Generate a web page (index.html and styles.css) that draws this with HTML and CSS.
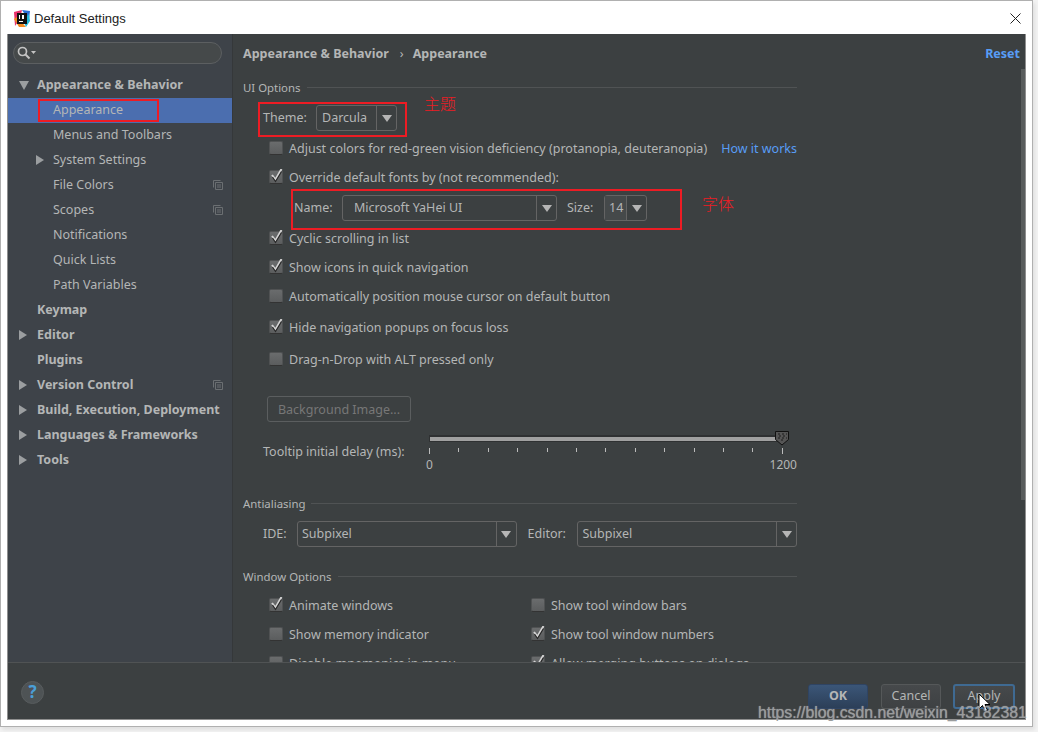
FILE: index.html
```html
<!DOCTYPE html>
<html lang="en">
<head>
    <meta charset="UTF-8">
    <title>Default Settings</title>
    <link rel="stylesheet" href="styles.css">
</head>
<body>
    <svg class="defs" width="0" height="0">
        <symbol id="copy-icon" viewBox="0 0 10 10">
            <path d="M0.5 7.5V0.5H7.5" fill="none" stroke="#6b6f72"/>
            <path d="M2.5 2.5H9.5V9.5H2.5Z M4 5H8 M4 7H8" fill="none" stroke="#6b6f72"/>
        </symbol>
        <symbol id="check-icon" viewBox="0 0 14 14">
            <path d="M3 6L6.5 10.5L12.5 0" fill="none" stroke="#d4d4d4" stroke-width="2"/>
            <path d="M3.5 8L6.5 12.5L12.5 2.5" fill="none" stroke="#262626" stroke-width="1.2"/>
        </symbol>
    </svg>

    <div class="window">
        <div class="titlebar">
            <svg class="app-icon" width="16" height="17" viewBox="0 0 16 17">
                <path d="M0 2L8 0L6 9L1 16Z" fill="#e8316b"/>
                <path d="M8 0L16 1L15 9L10 3Z" fill="#2a6fd6"/>
                <path d="M0 9L5 17H12L3 7Z" fill="#f28a1e"/>
                <path d="M12 17L16 11L15 4L9 10Z" fill="#22b8d8"/>
                <rect x="3" y="3" width="10" height="11" fill="#111"/>
                <rect x="5" y="5" width="1" height="4" fill="#fff"/>
                <rect x="8" y="5" width="2" height="4" fill="#fff"/>
                <rect x="5" y="11" width="4" height="1" fill="#fff"/>
            </svg>
            <span class="title-text">Default Settings</span>
            <svg class="close-icon" width="11" height="11" viewBox="0 0 11 11">
                <path d="M0.5 0.5L10.5 10.5M10.5 0.5L0.5 10.5" stroke="#222" fill="none"/>
            </svg>
        </div>

        <div class="frame">
            <div class="settings-body">
                <div class="sidebar">
                    <div class="search">
                        <svg width="20" height="14" viewBox="0 0 20 14">
                            <circle cx="5.5" cy="5.5" r="4" fill="none" stroke="#c4c4c4" stroke-width="1.7"/>
                            <path d="M8.5 8.5L12.5 12.5" stroke="#c4c4c4" stroke-width="2"/>
                            <path d="M14 5H19L16.5 8Z" fill="#c4c4c4"/>
                        </svg>
                    </div>
                    <div class="tree-row top"><i class="arrow-down"></i><span>Appearance &amp; Behavior</span></div>
                    <div class="tree-row child selected"><i class="slot"></i><span>Appearance</span></div>
                    <div class="tree-row child"><i class="slot"></i><span>Menus and Toolbars</span></div>
                    <div class="tree-row child"><i class="arrow-right"></i><span>System Settings</span></div>
                    <div class="tree-row child"><i class="slot"></i><span>File Colors</span><svg class="copy"><use href="#copy-icon"/></svg></div>
                    <div class="tree-row child"><i class="slot"></i><span>Scopes</span><svg class="copy"><use href="#copy-icon"/></svg></div>
                    <div class="tree-row child"><i class="slot"></i><span>Notifications</span></div>
                    <div class="tree-row child"><i class="slot"></i><span>Quick Lists</span></div>
                    <div class="tree-row child"><i class="slot"></i><span>Path Variables</span></div>
                    <div class="tree-row top"><i class="slot"></i><span>Keymap</span></div>
                    <div class="tree-row top"><i class="arrow-right"></i><span>Editor</span></div>
                    <div class="tree-row top"><i class="slot"></i><span>Plugins</span></div>
                    <div class="tree-row top"><i class="arrow-right"></i><span>Version Control</span><svg class="copy"><use href="#copy-icon"/></svg></div>
                    <div class="tree-row top"><i class="arrow-right"></i><span>Build, Execution, Deployment</span></div>
                    <div class="tree-row top"><i class="arrow-right"></i><span>Languages &amp; Frameworks</span></div>
                    <div class="tree-row top"><i class="arrow-right"></i><span>Tools</span></div>
                </div>

                <div class="main">
                    <div class="breadcrumb">
                        <b>Appearance &amp; Behavior</b>
                        <span class="crumb-sep">›</span>
                        <b>Appearance</b>
                        <a class="reset">Reset</a>
                    </div>

                    <div class="form">
                        <div class="group-title"><span>UI Options</span></div>

                        <div class="field-row theme-row">
                            <label>Theme:</label>
                            <div class="combo combo-theme"><span class="combo-value">Darcula</span><span class="combo-btn"><i></i></span></div>
                        </div>

                        <div class="check-row m7"><span class="box"></span><span>Adjust colors for red-green vision deficiency (protanopia, deuteranopia)</span><a class="link">How it works</a></div>
                        <div class="check-row m9"><span class="box"><svg><use href="#check-icon"/></svg></span><span>Override default fonts by (not recommended):</span></div>

                        <div class="field-row font-row">
                            <label>Name:</label>
                            <div class="combo combo-name"><span class="combo-value">Microsoft YaHei UI</span><span class="combo-btn"><i></i></span></div>
                            <label class="size-label">Size:</label>
                            <div class="combo combo-size"><span class="combo-value">14</span><span class="combo-btn"><i></i></span></div>
                        </div>

                        <div class="check-row m7"><span class="box"><svg><use href="#check-icon"/></svg></span><span>Cyclic scrolling in list</span></div>
                        <div class="check-row m9"><span class="box"><svg><use href="#check-icon"/></svg></span><span>Show icons in quick navigation</span></div>
                        <div class="check-row m9"><span class="box"></span><span>Automatically position mouse cursor on default button</span></div>
                        <div class="check-row m11"><span class="box"><svg><use href="#check-icon"/></svg></span><span>Hide navigation popups on focus loss</span></div>
                        <div class="check-row m12"><span class="box"></span><span>Drag-n-Drop with ALT pressed only</span></div>

                        <button class="bg-image-btn">Background Image...</button>

                        <div class="slider-row">
                            <label>Tooltip initial delay (ms):</label>
                            <div class="slider">
                                <div class="track"></div>
                                <svg class="thumb" width="16" height="16" viewBox="0 0 16 16">
                                    <path d="M1.5 1.5H14.5V9.5L8 15L1.5 9.5Z" fill="#555" stroke="#111"/>
                                    <path d="M4 4H6M8 4H10M12 4H13M5 6H7M9 6H11M4 8H6M8 8H10M12 8H13M7 10H9" stroke="#1d1d1d"/>
                                </svg>
                                <div class="ticks">
                                    <i class="major"></i><i></i><i></i><i></i><i></i><i></i><i></i><i></i><i></i><i></i><i></i><i></i><i class="major"></i>
                                </div>
                                <div class="slider-labels"><span>0</span><span>1200</span></div>
                            </div>
                        </div>

                        <div class="group-title g20"><span>Antialiasing</span></div>

                        <div class="field-row aa-row">
                            <label>IDE:</label>
                            <div class="combo combo-aa"><span class="combo-value">Subpixel</span><span class="combo-btn"><i></i></span></div>
                            <label class="editor-label">Editor:</label>
                            <div class="combo combo-aa"><span class="combo-value">Subpixel</span><span class="combo-btn"><i></i></span></div>
                        </div>

                        <div class="group-title g20"><span>Window Options</span></div>

                        <div class="option-grid">
                            <div class="check-row"><span class="box"><svg><use href="#check-icon"/></svg></span><span>Animate windows</span></div>
                            <div class="check-row"><span class="box"></span><span>Show tool window bars</span></div>
                            <div class="check-row"><span class="box"></span><span>Show memory indicator</span></div>
                            <div class="check-row"><span class="box"><svg><use href="#check-icon"/></svg></span><span>Show tool window numbers</span></div>
                            <div class="check-row"><span class="box"></span><span>Disable mnemonics in menu</span></div>
                            <div class="check-row"><span class="box"><svg><use href="#check-icon"/></svg></span><span>Allow merging buttons on dialogs</span></div>
                        </div>
                    </div>
                    <div class="scrollbar"></div>
                </div>
            </div>

            <div class="footer">
                <div class="help">?</div>
                <div class="footer-btns">
                    <button class="btn btn-ok">OK</button>
                    <button class="btn">Cancel</button>
                    <button class="btn btn-apply">Apply</button>
                </div>
            </div>
        </div>

        <!-- red notes drawn over the screenshot -->
        <div class="mark mark-item"></div>
        <div class="mark mark-theme"></div>
        <div class="mark mark-font"></div>
        <div class="note note-theme">主题</div>
        <div class="note note-font">字体</div>
    </div>

    <svg class="cursor" width="13" height="20" viewBox="0 0 13 20">
        <path d="M1 1V16L4.5 12.5L7 18.5L9.5 17.5L7 11.5H12Z" fill="#fff" stroke="#000"/>
    </svg>
    <div class="watermark">https://blog.csdn.net/weixin_43182381</div>
</body>
</html>
```

FILE: styles.css
```css
*{
    margin:0;
    padding:0;
    box-sizing:border-box;
}
body{
    width:1038px;
    height:732px;
    overflow:hidden;
    position:relative;
    background:#f3f3f3;
    font-family:"Noto Sans","Noto Sans CJK SC",sans-serif;
    font-size:12.5px;
    color:#b4b6b6;
}
.defs{
    position:absolute;
}
.window{
    position:relative;
    width:1033px;
    height:727px;
    display:flex;
    flex-direction:column;
    padding:0 6px 6px;
    background:#fff;
    border:1px solid #b0b0b0;
    box-shadow:2px 3px 4px rgba(0,0,0,.08);
}
.titlebar{
    height:33px;
    flex:none;
    display:flex;
    align-items:center;
    padding-top:1px;
    color:#222;
    font-family:"Liberation Sans",sans-serif;
    font-size:13px;
}
.app-icon{
    margin-left:7px;
    margin-right:4px;
}
.close-icon{
    margin-left:auto;
    margin-right:5px;
}
.frame{
    flex:1;
    display:flex;
    flex-direction:column;
    border:1px solid #8f8f8f;
    border-top:0;
    background:#3c4041;
}
.settings-body{
    height:628px;
    flex:none;
    display:flex;
}

/* left tree */
.sidebar{
    width:225px;
    flex:none;
    padding-top:8px;
    background:#3e4349;
    border-right:1px solid #35383a;
    overflow:hidden;
}
.search{
    width:209px;
    height:22px;
    margin:0 0 9px 5px;
    padding:3px 0 0 3px;
    background:#45494a;
    border:1px solid #5c5f61;
    border-radius:11px;
}
.search svg{
    display:block;
}
.tree-row{
    height:25px;
    display:flex;
    align-items:center;
    padding-bottom:3px;
    position:relative;
    white-space:nowrap;
}
.tree-row.top{
    padding-left:11px;
    font-weight:bold;
}
.tree-row.top i{
    width:18px;
}
.tree-row.child{
    padding-left:28px;
}
.tree-row.child i{
    width:17px;
}
.tree-row.selected{
    background:#4b6eaf;
}
.tree-row i{
    flex:none;
    height:10px;
    position:relative;
    top:1px;
}
.arrow-down::before{
    content:"";
    position:absolute;
    left:0;
    top:1px;
    border-left:5px solid transparent;
    border-right:5px solid transparent;
    border-top:9px solid #9b9ea0;
}
.arrow-right::before{
    content:"";
    position:absolute;
    left:0;
    top:0;
    border-top:5px solid transparent;
    border-bottom:5px solid transparent;
    border-left:8px solid #9b9ea0;
}
.copy{
    position:absolute;
    left:205px;
    top:7px;
    width:10px;
    height:10px;
}

/* right side */
.main{
    flex:1;
    position:relative;
    padding-left:10px;
    overflow:hidden;
}
.breadcrumb{
    height:40px;
    padding:0 5px 2px 0;
    display:flex;
    align-items:center;
}
.crumb-sep{
    margin:0 9px 0 11px;
}
.reset{
    margin-left:auto;
    color:#589df6;
    font-weight:bold;
}
.form{
    width:554px;
    padding-top:3px;
}
.group-title{
    height:20px;
    display:flex;
    align-items:center;
    font-size:11.4px;
}
.group-title::after{
    content:"";
    flex:1;
    height:1px;
    margin-left:6px;
    background:#505354;
}
.g20{
    margin-top:19px;
}
.field-row{
    display:flex;
    align-items:center;
    height:26px;
}
.field-row label{
    padding-bottom:2px;
}
.theme-row{
    margin-top:8px;
    padding-left:20px;
}
.theme-row label{
    width:53px;
}
.font-row{
    margin-top:8px;
    padding-left:51px;
}
.font-row label{
    width:48px;
}
.font-row .size-label{
    width:37px;
    margin-left:10px;
}
.aa-row{
    margin-top:8px;
    padding-left:20px;
}
.aa-row label{
    width:34px;
}
.aa-row .editor-label{
    width:50px;
    margin-left:11px;
}
.combo{
    height:26px;
    display:flex;
    border:1px solid #646464;
    border-radius:3px;
}
.combo-value{
    flex:1;
    line-height:23px;
    padding-left:5px;
    white-space:nowrap;
}
.combo-btn{
    width:20px;
    flex:none;
    border-left:1px solid #646464;
    display:flex;
    align-items:center;
    justify-content:center;
}
.combo-btn i{
    border-left:5px solid transparent;
    border-right:5px solid transparent;
    border-top:7px solid #b5b5b5;
}
.combo-theme{
    width:81px;
}
.combo-name{
    width:215px;
}
.combo-name .combo-value{
    padding-left:11px;
}
.combo-size{
    width:43px;
}
.combo-size .combo-value{
    background:#45494a;
    padding-left:4px;
}
.combo-aa{
    width:220px;
}
.combo-aa .combo-value{
    padding-left:4px;
}
.check-row{
    height:20px;
    display:flex;
    align-items:center;
    padding-left:26px;
    white-space:nowrap;
}
.m7{
    margin-top:7px;
}
.m9{
    margin-top:9px;
}
.m11{
    margin-top:11px;
}
.m12{
    margin-top:12px;
}
.box{
    width:14px;
    height:14px;
    flex:none;
    margin-right:6px;
    background:linear-gradient(#6a6c6d,#5b5d5e);
    border:1px solid #505253;
    border-bottom-color:#333;
    border-radius:2px;
    position:relative;
}
.box svg{
    position:absolute;
    left:-1px;
    top:-2px;
    width:14px;
    height:14px;
    overflow:visible;
}
.link{
    margin-left:14px;
    color:#589df6;
}
.bg-image-btn{
    display:block;
    width:144px;
    height:26px;
    margin:27px 0 0 24px;
    background:none;
    border:1px solid #5b5e5f;
    border-radius:3px;
    color:#777;
    font:inherit;
}
.slider-row{
    display:flex;
    margin-top:10px;
    padding-left:20px;
}
.slider-row label{
    width:166px;
    flex:none;
    margin-top:11px;
    white-space:nowrap;
}
.slider{
    width:354px;
    height:42px;
    position:relative;
}
.track{
    height:7px;
    margin-top:3px;
    background:#a0a0a0;
    border:1px solid #2f3132;
    border-top-width:2px;
}
.thumb{
    position:absolute;
    left:345px;
    top:-2px;
}
.ticks{
    display:flex;
    justify-content:space-between;
    align-items:flex-start;
    height:6px;
    margin-top:6px;
}
.ticks i{
    width:1px;
    height:4px;
    background:#bbb;
}
.ticks .major{
    height:6px;
}
.slider-labels{
    display:flex;
    justify-content:space-between;
    margin:2px -14px 0 -3px;
    font-size:12px;
    line-height:18px;
}
.option-grid{
    display:grid;
    grid-template-columns:262px 1fr;
    row-gap:9px;
    margin-top:9px;
}
.scrollbar{
    position:absolute;
    right:0;
    top:35px;
    width:4px;
    height:431px;
    background:#595d5d;
}

/* bottom buttons */
.footer{
    flex:1;
    display:flex;
    justify-content:space-between;
    align-items:flex-start;
    padding:18px 10px 0 13px;
    border-top:1px solid #505354;
}
.help{
    width:23px;
    height:23px;
    border-radius:50%;
    background:#4e5355;
    border:1px solid #585c5e;
    color:#4a9fd8;
    font-size:17px;
    font-weight:bold;
    line-height:20px;
    text-align:center;
}
.footer-btns{
    display:flex;
    gap:13px;
    margin-top:3px;
}
.btn{
    width:60px;
    height:25px;
    padding-bottom:2px;
    background:linear-gradient(#46494b,#3e4143);
    border:1px solid #555859;
    border-radius:3px;
    color:#b4b6b6;
    font:inherit;
}
.btn-ok{
    background:linear-gradient(#3b5678,#2c3f58);
    border-color:#2f4463;
    font-weight:bold;
}
.btn-apply{
    width:62px;
    margin-left:-1px;
    border:2px solid #3f6a92;
}

/* annotations */
.mark{
    position:absolute;
    border:2px solid #ed1c24;
}
.mark-item{
    left:37px;
    top:98px;
    width:121px;
    height:23px;
}
.mark-theme{
    left:257px;
    top:101px;
    width:149px;
    height:35px;
}
.mark-font{
    left:290px;
    top:188px;
    width:391px;
    height:41px;
}
.note{
    position:absolute;
    color:#ed1c24;
    font-family:"Noto Sans CJK SC",sans-serif;
    font-size:16px;
    font-weight:300;
    line-height:20px;
}
.note-theme{
    left:423px;
    top:92px;
}
.note-font{
    left:701px;
    top:192px;
}
.cursor{
    position:absolute;
    left:978px;
    top:693px;
}
.watermark{
    position:absolute;
    left:758px;
    top:703px;
    font-family:"Liberation Sans",sans-serif;
    font-size:15.8px;
    line-height:20px;
    white-space:nowrap;
    color:#9a9c9d;
    text-shadow:0 0 1px rgba(255,255,255,.5);
}
```
